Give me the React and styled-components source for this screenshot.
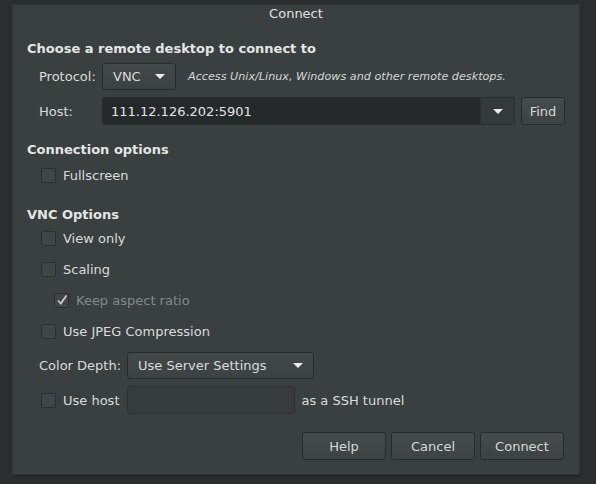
import React from "react";
import styled, { createGlobalStyle } from "styled-components";

const Global = createGlobalStyle`
  html, body {
    margin: 0;
    background: #2b2e2f;
  }
  body {
    font-family: "DejaVu Sans", "Liberation Sans", sans-serif;
    font-size: 13px;
    color: #dadcdc;
  }
`;

const Screen = styled.div`
  width: 596px;
  height: 484px;
  padding: 5px 17px 10px 13px;
  box-sizing: border-box;
`;

const Dialog = styled.div`
  height: 469px;
  background: #3a3f3f;
  box-shadow: 0 0 0 1px #313535, 1px 2px 2px rgba(0, 0, 0, 0.4);
  display: flex;
  flex-direction: column;
`;

const TitleBar = styled.div`
  height: 24px;
  padding-top: 1px;
  line-height: 16px;
  text-align: center;
  color: #e0e2e2;
  box-sizing: border-box;
`;

const Body = styled.div`
  padding: 0 14px;
  display: flex;
  flex-direction: column;
`;

const Heading = styled.div`
  font-weight: bold;
  height: 18px;
  line-height: 18px;
  margin-top: ${(p) => p.$mt}px;
  color: #e4e6e6;
`;

const Row = styled.div`
  display: flex;
  align-items: center;
  height: ${(p) => p.$h || 28}px;
  margin-top: ${(p) => p.$mt}px;
  padding-left: ${(p) => p.$indent || 12}px;
`;

const Label = styled.span`
  width: ${(p) => (p.$w ? p.$w + "px" : "auto")};
  margin-right: ${(p) => p.$gap || 0}px;
  flex-shrink: 0;
`;

const Note = styled.span`
  font-size: 11.2px;
  font-style: italic;
  margin-left: 12px;
  color: #d4d6d6;
`;

const Combo = styled.div`
  width: ${(p) => p.$w}px;
  height: 27px;
  box-sizing: border-box;
  border: 1px solid #262a2a;
  border-radius: 3px;
  background: linear-gradient(#434949, #3c4242);
  display: flex;
  align-items: center;
  justify-content: space-between;
  padding: 0 10px;
  flex-shrink: 0;
`;

const Arrow = styled.span`
  width: 0;
  height: 0;
  border-left: 5px solid transparent;
  border-right: 5px solid transparent;
  border-top: 5px solid #eceeee;
`;

const Entry = styled.div`
  flex: 1;
  height: 28px;
  box-sizing: border-box;
  border: 1px solid #2a2e2e;
  border-radius: 3px;
  background: #25292a;
  display: flex;
  align-items: center;
  overflow: hidden;
`;

const EntryText = styled.span`
  flex: 1;
  padding-left: 8px;
  color: #e2e4e4;
`;

const EntryDrop = styled.div`
  width: 33px;
  height: 100%;
  border-left: 1px solid #2a2e2e;
  background: #343939;
  display: flex;
  align-items: center;
  justify-content: center;
`;

const Button = styled.button`
  width: ${(p) => p.$w || 84}px;
  height: 28px;
  margin-left: ${(p) => p.$ml || 0}px;
  box-sizing: border-box;
  border: 1px solid #262a2a;
  border-radius: 3px;
  background: linear-gradient(#464c4c, #3d4343);
  color: #d6d8d8;
  font-family: inherit;
  font-size: 13px;
  padding: 0;
  flex-shrink: 0;
`;

const Box = styled.span`
  width: 13px;
  height: 13px;
  border: 1px solid #2a2e2e;
  border-radius: 2px;
  background: #404646;
  margin: 0 7px 0 2px;
  display: inline-flex;
  align-items: center;
  justify-content: center;
  flex-shrink: 0;
`;

const CheckText = styled.span`
  color: ${(p) => (p.$disabled ? "#858a8a" : "#dadcdc")};
`;

const TextField = styled.div`
  width: 168px;
  height: 28px;
  box-sizing: border-box;
  border: 1px solid #2b2f2f;
  border-radius: 3px;
  background: #363b3b;
  margin: 0 6px 0 8px;
`;

const ButtonRow = styled.div`
  display: flex;
  justify-content: flex-end;
  gap: 5px;
  margin-top: 18px;
  padding-right: 1px;
`;

function Check({ label, checked, disabled, mt, indent }) {
  return (
    <Row $h={22} $mt={mt} $indent={indent}>
      <Box>
        {checked && (
          <svg width="12" height="12" viewBox="0 0 12 12">
            <path d="M2 6.5 L4.8 9.5 L10.5 1.5" fill="none" stroke="#c8cbcb" strokeWidth="1.8" />
          </svg>
        )}
      </Box>
      <CheckText $disabled={disabled}>{label}</CheckText>
    </Row>
  );
}

export default function App() {
  return (
    <Screen>
      <Global />
      <Dialog>
        <TitleBar>Connect</TitleBar>
        <Body>
          <Heading $mt={11}>Choose a remote desktop to connect to</Heading>
          <Row $h={27} $mt={5}>
            <Label $w={63}>Protocol:</Label>
            <Combo $w={74}>
              <span>VNC</span>
              <Arrow />
            </Combo>
            <Note>Access Unix/Linux, Windows and other remote desktops.</Note>
          </Row>
          <Row $mt={7}>
            <Label $w={63}>Host:</Label>
            <Entry>
              <EntryText>111.12.126.202:5901</EntryText>
              <EntryDrop>
                <Arrow />
              </EntryDrop>
            </Entry>
            <Button $w={44} $ml={6}>Find</Button>
          </Row>

          <Heading $mt={16}>Connection options</Heading>
          <Check label="Fullscreen" mt={5} />

          <Heading $mt={20}>VNC Options</Heading>
          <Check label="View only" mt={3} />
          <Check label="Scaling" mt={9} />
          <Check label="Keep aspect ratio" checked disabled mt={9} indent={25} />
          <Check label="Use JPEG Compression" mt={9} />
          <Row $h={27} $mt={10}>
            <Label $gap={6}>Color Depth:</Label>
            <Combo $w={187}>
              <span>Use Server Settings</span>
              <Arrow />
            </Combo>
          </Row>
          <Row $mt={7}>
            <Box>{null}</Box>
            <CheckText>Use host</CheckText>
            <TextField />
            <span>as a SSH tunnel</span>
          </Row>

          <ButtonRow>
            <Button>Help</Button>
            <Button>Cancel</Button>
            <Button>Connect</Button>
          </ButtonRow>
        </Body>
      </Dialog>
    </Screen>
  );
}
